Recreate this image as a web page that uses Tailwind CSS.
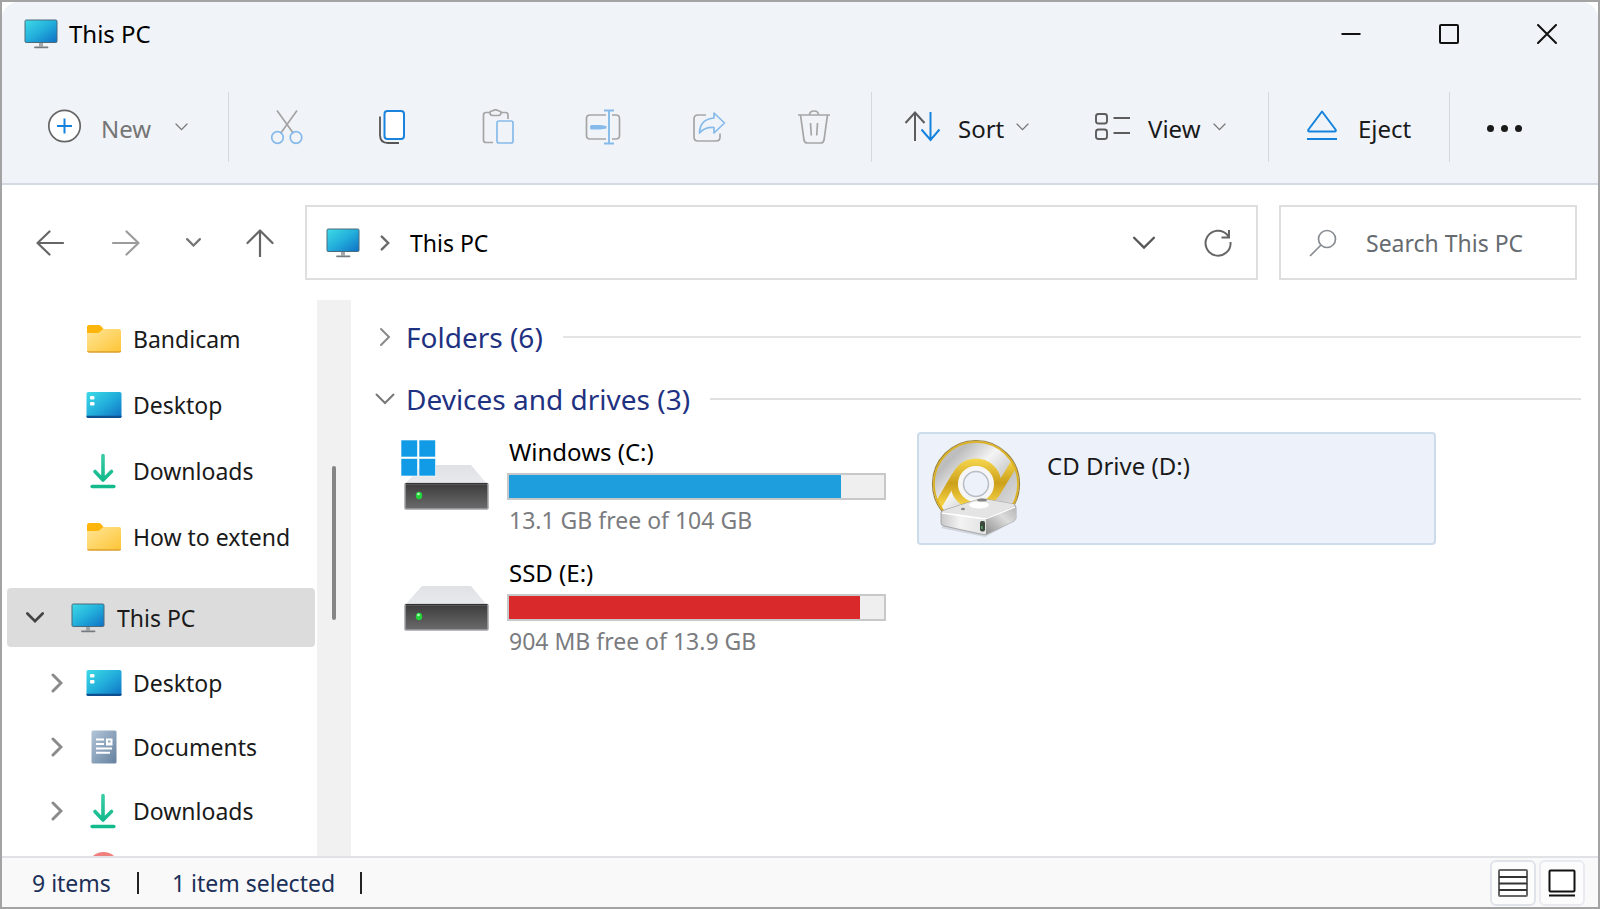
<!DOCTYPE html>
<html lang="en">

<head>
    <meta charset="UTF-8">
    <meta name="viewport" content="width=device-width, initial-scale=1.0">
    <title>This PC</title>
    <script src="https://cdn.jsdelivr.net/npm/@tailwindcss/browser@4"></script>
</head>

<body class="bg-[#e9ebee] font-['Noto_Sans',sans-serif] text-[#1a1a1a]">

    <!-- Shared icons -->
    <svg class="absolute size-0" aria-hidden="true">
        <defs>
            <linearGradient id="screen" x1="0" y1="0" x2="1" y2="1">
                <stop offset="0" stop-color="#3fdbe6" />
                <stop offset=".5" stop-color="#22aedb" />
                <stop offset="1" stop-color="#0f70c4" />
            </linearGradient>
            <linearGradient id="folder" x1="0" y1="0" x2="1" y2="1">
                <stop offset="0" stop-color="#ffe597" />
                <stop offset="1" stop-color="#fdc536" />
            </linearGradient>
            <linearGradient id="green" x1="0" y1="0" x2="0" y2="1">
                <stop offset="0" stop-color="#3acba4" />
                <stop offset="1" stop-color="#13ba8c" />
            </linearGradient>
            <linearGradient id="paper" x1="0" y1="0" x2="1" y2="1">
                <stop offset="0" stop-color="#b3c5d8" />
                <stop offset="1" stop-color="#64819f" />
            </linearGradient>
            <linearGradient id="driveFront" x1="0" y1="0" x2="0" y2="1">
                <stop offset="0" stop-color="#3c3c3c" />
                <stop offset="1" stop-color="#6b6b6b" />
            </linearGradient>
            <linearGradient id="driveTop" x1="0" y1="0" x2="0" y2="1">
                <stop offset="0" stop-color="#dfe1e5" />
                <stop offset="1" stop-color="#e9eaed" />
            </linearGradient>
        </defs>
        <symbol id="i-pc" viewBox="0 0 34 30">
            <rect x="1" y="1" width="32" height="22.5" rx="1.2" fill="url(#screen)" stroke="#4b6b7d" />
            <path d="M15 24h4v3.5h-4z" fill="#a3a7ab" />
            <path d="M11 28.3h12.5" stroke="#777b7f" stroke-width="1.8" stroke-linecap="round" />
        </symbol>
        <symbol id="i-folder" viewBox="0 0 36 30">
            <path d="M1 3Q1 1 3 1h9.5q1.5 0 2.5 1l3 3.5V12H1z" fill="#fdb50b" />
            <path d="M1 9h10q2 0 3.5-1.500L16 6q1-1 2.500-1H33q2 0 2 2v19q0 2-2 2H3q-2 0-2-2z" fill="url(#folder)" />
            <path d="M1.5 27q.5 1 1.500 1h30q1.500 0 1.700-1.200" fill="none" stroke="#dc9f28" stroke-width="1.3" />
        </symbol>
        <symbol id="i-desktop" viewBox="0 0 36 28">
            <rect x="0.5" y="1" width="35" height="26" rx="1.8" fill="url(#screen)" />
            <path d="M.5 24.700h35v.8q0 1.500-1.800 1.500H2.300Q.5 27 .5 25.500z" fill="#0d4f8f" />
            <rect x="4" y="5" width="4.5" height="3.5" rx="1" fill="#fff" />
            <rect x="4" y="11" width="4.5" height="3.5" rx="1" fill="#fff" />
        </symbol>
        <symbol id="i-download" viewBox="0 0 28 36">
            <path d="M13 2.500V27M5 18.500l8 8.500 8.500-8.500" fill="none" stroke="url(#green)" stroke-width="3.6"
                stroke-linecap="round" stroke-linejoin="round" />
            <path d="M2.200 33.500h21.600" stroke="#13ba8c" stroke-width="3.6" stroke-linecap="round" />
        </symbol>
        <symbol id="i-document" viewBox="0 0 26 34">
            <rect x="0.5" y="0.5" width="25" height="33" rx="1.5" fill="url(#paper)" />
            <path d="M5 9.500h8M5 14h8M5 18.500h16M5 22.800h14" stroke="#fff" stroke-width="2" />
            <path d="M15 8.500h6.500v7H15z" fill="#fff" />
            <path d="M17 10.500h2.500v2H17z" fill="#93a9c0" />
        </symbol>
        <symbol id="i-right" viewBox="0 0 12 20">
            <path d="M2 2l8 8-8 8" fill="none" stroke="currentColor" stroke-linecap="round" />
        </symbol>
        <symbol id="i-down" viewBox="0 0 20 12">
            <path d="M1.500 1.500L10 10l8.500-8.500" fill="none" stroke="currentColor" stroke-linecap="round" />
        </symbol>
        <symbol id="i-drive" viewBox="0 0 88 72">
            <path d="M21 25h49l16 19H4z" fill="url(#driveTop)" />
            <rect x="4" y="43.5" width="83" height="25.5" rx="1" fill="url(#driveFront)" stroke="#a2a2a8" stroke-width="1.5" />
            <path d="M4.500 43.500h82" stroke="#333" stroke-width="1.2" />
            <ellipse cx="18" cy="55.500" rx="3.2" ry="3.8" fill="#23d53a" />
            <circle cx="17.5" cy="54" r="1.3" fill="#b5ffb8" />
        </symbol>
    </svg>

    <div class="flex h-screen flex-col overflow-hidden border-2 border-[#a3a3a3] bg-white">

        <header class="rounded-t-2xl border-b-2 border-[#d3dae3] bg-[#f0f4f8] text-[24px] leading-8">
            <!-- Title bar -->
            <div class="flex h-[64px] items-center pl-[22px]">
                <svg class="h-[30px] w-[34px]"><use href="#i-pc" /></svg>
                <h1 class="grow pl-[11px] text-black">This PC</h1>
                <button class="flex w-[98px] justify-center" aria-label="Minimize">
                    <svg class="size-5" viewBox="0 0 20 20" fill="none" stroke="#111" stroke-width="2"><path d="M.5 10h19" /></svg>
                </button>
                <button class="flex w-[98px] justify-center" aria-label="Maximize">
                    <svg class="size-5" viewBox="0 0 20 20" fill="none" stroke="#111" stroke-width="2"><rect x="1" y="1" width="18" height="18" rx="1" /></svg>
                </button>
                <button class="mr-0.5 flex w-[98px] justify-center" aria-label="Close">
                    <svg class="size-5" viewBox="0 0 20 20" fill="none" stroke="#111" stroke-width="2" stroke-linecap="round"><path d="M1 1l18 18M19 1L1 19" /></svg>
                </button>
            </div>

            <!-- Toolbar -->
            <div class="flex h-[117px] items-center pt-1" role="toolbar" aria-label="Commands">
                <button class="flex w-[226px] items-center pl-[45px] text-[#767676]">
                    <svg class="size-[35px]" viewBox="0 0 35 35" fill="none">
                        <circle cx="17.5" cy="17" r="15.7" fill="#fff" stroke="#666" stroke-width="1.7" />
                        <path d="M17.500 9.500v15M10 17h15" stroke="#1583dd" stroke-width="2" />
                    </svg>
                    <span class="pt-1 pl-[19px]">New</span>
                    <svg class="ml-6 h-2 w-[13px] stroke-2 text-[#777]"><use href="#i-down" /></svg>
                </button>
                <span class="h-[70px] w-px bg-[#d5d9dd]"></span>
                <div class="flex px-[5px]">
                    <button class="flex w-[105px] justify-center" aria-label="Cut">
                        <svg class="size-9" viewBox="0 0 36 36" fill="none" stroke-width="1.7">
                            <path d="M8 1.500l16.500 23M28 1.500L11.500 24.500" stroke="#a3a3a3" />
                            <circle cx="8.5" cy="28.500" r="5.8" stroke="#86baea" />
                            <circle cx="27" cy="28.500" r="5.8" stroke="#86baea" />
                        </svg>
                    </button>
                    <button class="flex w-[105px] justify-center" aria-label="Copy">
                        <svg class="size-9" viewBox="0 0 36 36" fill="none">
                            <path d="M6 7.500V26q0 8 8 8h11" stroke="#555" stroke-width="1.8" />
                            <rect x="10.5" y="2" width="19.5" height="28" rx="3" fill="#fff" stroke="#1a83dd" stroke-width="2" />
                        </svg>
                    </button>
                    <button class="flex w-[106px] justify-center" aria-label="Paste">
                        <svg class="size-9" viewBox="0 0 36 36" fill="none" stroke-width="1.7">
                            <path d="M14 33.500H7q-2.500 0-2.500-2.500V6Q4.500 3.500 7 3.500h4M22 3.500h4.500q2.500 0 2.500 2.500v4" stroke="#a5a5a5" />
                            <path d="M11 3.500q0-1.500 2-1.500 2-1.200 3.500-1.200T20 2q2 0 2 1.500 0 3-2.500 3h-6Q11 6.500 11 3.500z" stroke="#a5a5a5" />
                            <rect x="18" y="12" width="16" height="22" rx="2" stroke="#86baea" />
                        </svg>
                    </button>
                    <button class="flex w-[105px] justify-center" aria-label="Rename">
                        <svg class="size-9" viewBox="0 0 36 36" fill="none" stroke-width="1.7">
                            <path d="M21 6H5Q1.500 6 1.500 9.500v17Q1.500 30 5 30h16M27 6h4q3.500 0 3.500 3.500v17Q34.500 30 31 30h-4" stroke="#a5a5a5" />
                            <path d="M24 2v32M19 1.500h10M19 34.500h10" stroke="#86baea" stroke-width="1.9" />
                            <path d="M6 16h9l6.500 1v2.500l-6.500 1H6q-1 0-1-2t1-2.500z" fill="#86baea" />
                        </svg>
                    </button>
                    <button class="flex w-[106px] justify-center" aria-label="Share">
                        <svg class="size-9" viewBox="0 0 36 36" fill="none" stroke-width="1.7" stroke-linejoin="round">
                            <path d="M16 6H8Q4 6 4 10v18q0 4 4 4h18q4 0 4-4v-3.500" stroke="#a5a5a5" />
                            <path d="M24 4l10.500 10L24 24v-5.500Q14.500 18 9.500 24 10 10 24 9z" stroke="#86baea" />
                        </svg>
                    </button>
                    <button class="flex w-[105px] justify-center" aria-label="Delete">
                        <svg class="size-9" viewBox="0 0 36 36" fill="none" stroke="#a5a5a5" stroke-width="1.7">
                            <path d="M2 6h32M4.500 6L8 31q.5 3 3.500 3h13q3 0 3.500-3l3.500-25M14.500 14l.8 12.500M21.500 14l-.8 12.500" />
                            <path d="M13.500 6q0-4 4.500-4t4.500 4" />
                        </svg>
                    </button>
                </div>
                <span class="h-[70px] w-px bg-[#d5d9dd]"></span>
                <button class="flex w-[190px] items-center pl-8">
                    <svg class="h-9 w-[38px]" viewBox="0 0 38 36" fill="none" stroke-width="2">
                        <path d="M11 32V4M1.500 14L11 3.500 20.500 14" stroke="#5c5c5c" />
                        <path d="M26.500 3v28M17.500 20.500l9 10.500 9-10.500" stroke="#1583dd" />
                    </svg>
                    <span class="pt-1 pl-4">Sort</span>
                    <svg class="ml-3 h-2 w-[13px] stroke-2 text-[#777]"><use href="#i-down" /></svg>
                </button>
                <button class="flex w-[206px] items-center pl-8">
                    <svg class="h-9 w-[38px]" viewBox="0 0 38 36" fill="none" stroke="#5c5c5c" stroke-width="1.9">
                        <rect x="2" y="5" width="11" height="9.5" rx="2.5" />
                        <rect x="2" y="20.500" width="11" height="9.5" rx="2.5" />
                        <path d="M19.500 9H36M19.500 24H36" />
                    </svg>
                    <span class="pt-1 pl-4">View</span>
                    <svg class="ml-3 h-2 w-[13px] stroke-2 text-[#777]"><use href="#i-down" /></svg>
                </button>
                <span class="h-[70px] w-px bg-[#d5d9dd]"></span>
                <button class="flex w-[180px] items-center pl-[37px]">
                    <svg class="h-9 w-8" viewBox="0 0 32 36" fill="none" stroke="#1583dd" stroke-width="2" stroke-linejoin="round">
                        <path d="M16 2.500l13.500 18q1 2-1 2h-25q-2 0-1-2z" />
                        <path d="M1 30h30" />
                    </svg>
                    <span class="pt-1 pl-5">Eject</span>
                </button>
                <span class="h-[70px] w-px bg-[#d5d9dd]"></span>
                <button class="ml-[37px] flex gap-[7px] pt-1" aria-label="See more">
                    <span class="size-[7px] rounded-full bg-[#1a1a1a]"></span>
                    <span class="size-[7px] rounded-full bg-[#1a1a1a]"></span>
                    <span class="size-[7px] rounded-full bg-[#1a1a1a]"></span>
                </button>
            </div>
        </header>

        <!-- Navigation and address -->
        <div class="flex h-[115px] shrink-0 items-center pr-[21px] pl-[10px] text-[23px] leading-8">
            <button class="flex w-[76px] justify-center" aria-label="Back">
                <svg class="size-7" viewBox="0 0 28 28" fill="none" stroke="#666" stroke-width="2.2" stroke-linecap="round" stroke-linejoin="round"><path d="M27 14H1.500M13.500 2.500L1.500 14l12 11.500" /></svg>
            </button>
            <button class="flex w-[76px] justify-center" aria-label="Forward">
                <svg class="size-7" viewBox="0 0 28 28" fill="none" stroke="#9c9c9c" stroke-width="2.2" stroke-linecap="round" stroke-linejoin="round"><path d="M1 14h25.500M14.500 2.500l12 11.500-12 11.500" /></svg>
            </button>
            <button class="flex w-[58px] justify-center" aria-label="Recent locations">
                <svg class="h-[9px] w-[15px] stroke-3 text-[#777]"><use href="#i-down" /></svg>
            </button>
            <button class="flex w-[76px] justify-center" aria-label="Up">
                <svg class="size-7" viewBox="0 0 28 28" fill="none" stroke="#666" stroke-width="2.2" stroke-linecap="round" stroke-linejoin="round"><path d="M14 27.500V1.500M1.500 14L14 1.500 26.500 14" /></svg>
            </button>
            <div class="ml-[7px] flex h-[75px] grow items-center border-2 border-[#dedede] pr-6 pl-[19px]">
                <svg class="h-[30px] w-[34px]"><use href="#i-pc" /></svg>
                <svg class="ml-5 h-4 w-2.5 stroke-3 text-[#6a6a6a]"><use href="#i-right" /></svg>
                <button class="pl-5 text-black">This PC</button>
                <button class="ml-auto" aria-label="Previous locations">
                    <svg class="h-[14px] w-6 stroke-2 text-[#555]"><use href="#i-down" /></svg>
                </button>
                <button class="ml-12" aria-label="Refresh">
                    <svg class="size-7" viewBox="0 0 28 28" fill="none" stroke="#666" stroke-width="2"><path d="M26.500 13a12.500 12.500 0 1 1-3-7l1 1.500M25 1v7.500h-7.500" /></svg>
                </button>
            </div>
            <label class="ml-[21px] flex h-[75px] w-[298px] items-center border-2 border-[#dedede] pl-[28px]">
                <svg class="size-7 shrink-0" viewBox="0 0 28 28" fill="none" stroke="#888c92" stroke-width="1.7"><circle cx="18" cy="10" r="8.5" /><path d="M12 16L1 27" /></svg>
                <input type="text" placeholder="Search This PC" aria-label="Search This PC"
                    class="ml-[29px] w-full min-w-0 outline-none placeholder:text-[#666b70]">
            </label>
        </div>

        <div class="flex min-h-0 grow">
            <!-- Sidebar -->
            <nav class="w-[315px] shrink-0 overflow-hidden pt-[6px] text-[23px] leading-8" aria-label="Folders">
                <a href="#" class="flex h-[66px] items-center gap-[11px] pl-[84px]">
                    <svg class="h-[30px] w-9"><use href="#i-folder" /></svg>Bandicam
                </a>
                <a href="#" class="flex h-[66px] items-center gap-[11px] pl-[84px]">
                    <svg class="h-7 w-9"><use href="#i-desktop" /></svg>Desktop
                </a>
                <a href="#" class="flex h-[66px] items-center gap-[11px] pl-[84px]">
                    <svg class="h-9 w-9"><use href="#i-download" /></svg>Downloads
                </a>
                <a href="#" class="flex h-[66px] items-center gap-[11px] pl-[84px]">
                    <svg class="h-[30px] w-9"><use href="#i-folder" /></svg>How to extend
                </a>
                <a href="#" aria-current="page"
                    class="mx-[5px] mt-[18px] mb-1 mr-0.5 flex h-[59px] items-center rounded bg-[#dcdcdc]">
                    <svg class="ml-[19px] h-[11px] w-[18px] stroke-3 text-[#444]"><use href="#i-down" /></svg>
                    <svg class="mr-3 ml-[27px] h-[30px] w-[34px]"><use href="#i-pc" /></svg>This PC
                </a>
                <a href="#" class="flex h-16 items-center gap-[11px] pl-[49px]">
                    <svg class="mr-3 h-5 w-3 stroke-3 text-[#8b8b8b]"><use href="#i-right" /></svg>
                    <svg class="h-7 w-9"><use href="#i-desktop" /></svg>Desktop
                </a>
                <a href="#" class="flex h-16 items-center gap-[11px] pl-[49px]">
                    <svg class="mr-3 h-5 w-3 stroke-3 text-[#8b8b8b]"><use href="#i-right" /></svg>
                    <svg class="h-[34px] w-9"><use href="#i-document" /></svg>Documents
                </a>
                <a href="#" class="flex h-16 items-center gap-[11px] pl-[49px]">
                    <svg class="mr-3 h-5 w-3 stroke-3 text-[#8b8b8b]"><use href="#i-right" /></svg>
                    <svg class="h-9 w-9"><use href="#i-download" /></svg>Downloads
                </a>
                <a href="#" class="flex h-16 pt-2 pl-[84px]" aria-label="Music">
                    <svg class="size-9" viewBox="0 0 36 36"><circle cx="17.5" cy="17" r="16" fill="#f0807e" /><circle cx="17.5" cy="18" r="13" fill="#f7a5a0" /></svg>
                </a>
            </nav>
            <div class="w-[34px] shrink-0 bg-[#f1f1f1] pt-[166px] pl-[15px]">
                <div class="h-[154px] w-1 rounded-full bg-[#858585]"></div>
            </div>

            <!-- Drives -->
            <main class="grow pt-[16px] pr-[17px] pl-[22px] text-[24px] leading-8">
                <section>
                    <h2 class="flex h-[42px] items-center text-[28px] text-[#1f3282]">
                        <button class="flex items-center" aria-expanded="false">
                            <span class="flex w-6 justify-center"><svg class="h-5 w-3 stroke-2 text-[#8a8a8a]"><use href="#i-right" /></svg></span>
                            <span class="pl-[9px]">Folders (6)</span>
                        </button>
                        <span class="ml-5 h-0.5 grow bg-[#e4e4e4]"></span>
                    </h2>
                </section>
                <section>
                    <h2 class="mt-5 flex h-[42px] items-center text-[28px] text-[#1f3282]">
                        <button class="flex items-center" aria-expanded="true">
                            <span class="flex w-6 justify-center"><svg class="h-3 w-5 stroke-2 text-[#777]"><use href="#i-down" /></svg></span>
                            <span class="pl-[9px]">Devices and drives (3)</span>
                        </button>
                        <span class="ml-5 h-0.5 grow bg-[#e0e0e0]"></span>
                    </h2>
                    <div class="grid grid-cols-[485px_519px] gap-x-[31px] gap-y-2 pt-3 pl-[28px]">
                        <div class="flex h-28 gap-[18px] pt-1">
                            <svg class="mt-1 h-[72px] w-[88px] shrink-0" viewBox="0 0 88 72">
                                <use href="#i-drive" />
                                <path d="M0 0h16.500v17H0zM18 0h16.500v17H18zM0 18.500h16.500V36H0zM18 18.500h16.500V36H18z" fill="#119be6" stroke="#fff" stroke-width=".6" />
                            </svg>
                            <div class="grow">
                                <h3 class="pl-0.5 text-black">Windows (C:)</h3>
                                <div class="mt-[5px] h-[27px] border-2 border-[#c6c8ca] bg-[#efefef]" role="meter" aria-label="Space used on C:" aria-valuenow="88">
                                    <div class="h-full bg-[#1e9edc]" style="width: 88.5%"></div>
                                </div>
                                <p class="mt-1 pl-0.5 text-[23px] text-[#7a7c80]">13.1 GB free of 104 GB</p>
                            </div>
                        </div>
                        <div class="flex h-[113px] gap-[26px] rounded-sm border-2 border-[#cddceb] bg-[#edf2fa] pt-[5px] pl-3">
                            <svg class="h-[98px] w-[90px] shrink-0" viewBox="0 0 90 98">
                                <defs>
                                    <linearGradient id="disc" x1="0" y1="0" x2="1" y2="1">
                                        <stop offset="0" stop-color="#c6c6c6" />
                                        <stop offset=".22" stop-color="#bdbdbd" />
                                        <stop offset=".42" stop-color="#f4f4f4" />
                                        <stop offset=".65" stop-color="#c4c4c4" />
                                        <stop offset="1" stop-color="#efefef" />
                                    </linearGradient>
                                    <linearGradient id="gold" x1="0" y1="20" x2="0" y2="68" gradientUnits="userSpaceOnUse">
                                        <stop offset="0" stop-color="#f5d64e" />
                                        <stop offset=".5" stop-color="#cda01a" />
                                        <stop offset="1" stop-color="#f8d84c" />
                                    </linearGradient>
                                    <linearGradient id="box" x1="0" y1="0" x2="1" y2="0">
                                        <stop offset="0" stop-color="#c9c9c9" />
                                        <stop offset=".25" stop-color="#f3f3f3" />
                                        <stop offset="1" stop-color="#cfcfcf" />
                                    </linearGradient>
                                    <linearGradient id="boxSide" x1="0" y1="1" x2="1" y2="0">
                                        <stop offset="0" stop-color="#8f8f8f" />
                                        <stop offset=".6" stop-color="#dcdcdc" />
                                        <stop offset="1" stop-color="#b5b5b5" />
                                    </linearGradient>
                                    <clipPath id="discClip"><circle cx="45" cy="45" r="43" /></clipPath>
                                </defs>
                                <circle cx="45" cy="45" r="43.5" fill="url(#disc)" stroke="#9d8440" stroke-width="1.2" />
                                <g clip-path="url(#discClip)">
                                    <circle cx="45" cy="45" r="21.500" fill="none" stroke="url(#gold)" stroke-width="8" />
                                    <path d="M4 72L25 36M64 56L86 20" fill="none" stroke="url(#gold)" stroke-width="8" />
                                    <circle cx="45" cy="45" r="42.500" fill="none" stroke="#deb21c" stroke-width="2.6" />
                                </g>
                                <circle cx="45" cy="45" r="18" fill="#f6f6f6" />
                                <circle cx="45" cy="45" r="12.500" fill="#edf2fa" stroke="#b8bcc4" stroke-width="1.5" />
                                <path d="M10 89l44 9 30-16-4-6-60 4z" fill="#000" opacity=".12" />
                                <path d="M10 74q0-2 2-2.500l35-11q3-1 6-.5l29 5q3 1 3 3.500V79q0 2-2 3L56 95q-1.500 1-4 .5L13 87q-3-.5-3-3z" fill="url(#box)" stroke="#999" stroke-width=".8" />
                                <path d="M55 79l30-11v11q0 2-2 3L55 95.500z" fill="url(#boxSide)" />
                                <path d="M12 72l35-11.500q3-1 6-.5l29 5q3 1 0 2.500L57 78q-2 1-5 .5L12 73z" fill="#e4e4e4" />
                                <path d="M11 74l40 5.500q3 .5 6-.5l27-11" fill="none" stroke="#fff" stroke-width="1.3" />
                                <ellipse cx="48" cy="66" rx="10" ry="3.500" fill="#fff" />
                                <ellipse cx="51" cy="61" rx="5" ry="1.5" fill="#858585" />
                                <ellipse cx="32" cy="70" rx="2" ry="1.2" fill="#888" />
                                <rect x="49" y="82" width="5" height="10.5" rx="2" fill="#38493b" />
                                <path d="M50.800 87v3" stroke="#54a361" stroke-width="1.5" />
                            </svg>
                            <h3 class="pt-[11px]">CD Drive (D:)</h3>
                        </div>
                        <div class="flex h-28 gap-[18px] pt-1">
                            <svg class="mt-1 h-[72px] w-[88px] shrink-0"><use href="#i-drive" /></svg>
                            <div class="grow">
                                <h3 class="pl-0.5 text-black">SSD (E:)</h3>
                                <div class="mt-[5px] h-[27px] border-2 border-[#c6c8ca] bg-[#efefef]" role="meter" aria-label="Space used on E:" aria-valuenow="94">
                                    <div class="h-full bg-[#da292b]" style="width: 93.5%"></div>
                                </div>
                                <p class="mt-1 pl-0.5 text-[23px] text-[#7a7c80]">904 MB free of 13.9 GB</p>
                            </div>
                        </div>
                    </div>
                </section>
            </main>
        </div>

        <!-- Status bar -->
        <footer class="flex h-[51px] shrink-0 items-center border-t-2 border-[#e1e2e6] bg-[#f9f9fa] pr-[13px] pl-[30px] text-[23px] leading-8 text-[#1c3058]">
            <span>9 items</span>
            <span class="mr-[33px] ml-[26px] h-[22px] w-0.5 bg-[#222]"></span>
            <span>1 item selected</span>
            <span class="ml-[25px] h-[22px] w-0.5 bg-[#222]"></span>
            <button class="ml-auto flex h-[46px] w-[46px] items-center justify-center rounded-md border-2 border-[#e1e3ea] bg-[#fcfcfd]" aria-label="Details view">
                <svg class="h-7 w-[30px]" viewBox="0 0 30 28" fill="#fff" stroke="#666" stroke-width="2"><rect x="1" y="1" width="28" height="26" rx="1" /><path d="M1 8h28M1 14.500h28M1 21h28" stroke="#333" /></svg>
            </button>
            <button class="ml-[3px] flex h-[46px] w-[46px] items-center justify-center rounded-md border-2 border-[#e9ebf0] bg-[#fcfcfd]" aria-label="Large icons view">
                <svg class="h-7 w-7" viewBox="0 0 28 28" fill="#fff" stroke="#111" stroke-width="2"><rect x="1.5" y="1.5" width="25" height="21" rx="1" /><path d="M1 26.500h26" /></svg>
            </button>
        </footer>
    </div>
</body>

</html>
